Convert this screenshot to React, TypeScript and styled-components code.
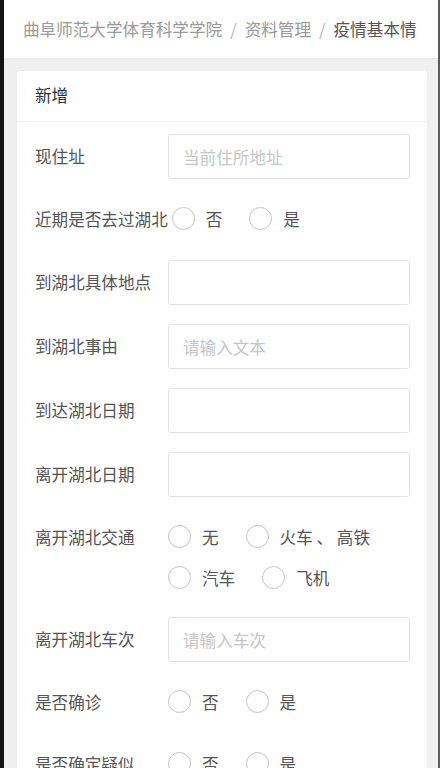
import React, { FC } from "react";
import styled, { createGlobalStyle } from "styled-components";

const GlobalStyle = createGlobalStyle`
  html, body {
    margin: 0;
    padding: 0;
    background: #f0f0f0;
  }
  body {
    font-family: "Noto Sans CJK SC", "Noto Sans", sans-serif;
    -webkit-font-smoothing: antialiased;
  }
`;

type Field =
  | { kind: "input"; label: string; placeholder?: string }
  | { kind: "radio"; label: string; options: string[] };

const fields: Field[] = [
  { kind: "input", label: "现住址", placeholder: "当前住所地址" },
  { kind: "radio", label: "近期是否去过湖北", options: ["否", "是"] },
  { kind: "input", label: "到湖北具体地点" },
  { kind: "input", label: "到湖北事由", placeholder: "请输入文本" },
  { kind: "input", label: "到达湖北日期" },
  { kind: "input", label: "离开湖北日期" },
  { kind: "radio", label: "离开湖北交通", options: ["无", "火车 、 高铁", "汽车", "飞机"] },
  { kind: "input", label: "离开湖北车次", placeholder: "请输入车次" },
  { kind: "radio", label: "是否确诊", options: ["否", "是"] },
  { kind: "radio", label: "是否确定疑似", options: ["否", "是"] },
];

const crumbs = ["曲阜师范大学体育科学学院", "资料管理", "疫情基本情"];

const App: FC = () => {
  return (
    <Frame>
      <GlobalStyle />
      <Breadcrumb>
        {crumbs.map((c, i) => (
          <React.Fragment key={c}>
            {i > 0 && <Separator>/</Separator>}
            <Crumb $current={i === crumbs.length - 1}>{c}</Crumb>
          </React.Fragment>
        ))}
      </Breadcrumb>
      <Main>
        <Card>
          <CardHeader>新增</CardHeader>
          <Form>
            {fields.map((f) => (
              <Row key={f.label}>
                <Label $radio={f.kind === "radio"}>{f.label}</Label>
                {f.kind === "input" ? (
                  <Input placeholder={f.placeholder} />
                ) : (
                  <Options>
                    {f.options.map((o) => (
                      <Radio key={o}>
                        <Circle />
                        <RadioText>{o}</RadioText>
                      </Radio>
                    ))}
                  </Options>
                )}
              </Row>
            ))}
          </Form>
        </Card>
      </Main>
    </Frame>
  );
};

export default App;

const Frame = styled.div`
  height: 100vh;
  box-sizing: border-box;
  border-left: 4px solid #141414;
  border-right: 2px solid #5c5c5c;
  background: #f0f0f0;
  overflow: hidden;
`;

const Breadcrumb = styled.div`
  height: 58px;
  box-sizing: border-box;
  padding-left: 19px;
  display: flex;
  align-items: center;
  white-space: nowrap;
  background: #fff;
  font-size: 16.6px;
  box-shadow: 0 1px 2px rgba(0, 0, 0, 0.04);
`;

const Crumb = styled.span<{ $current: boolean }>`
  color: ${(p) => (p.$current ? "#555" : "#9a9a9a")};
`;

const Separator = styled.span`
  margin: 0 8px;
  color: #b4b4b4;
`;

const Main = styled.div`
  padding: 12px 10px 0 12px;
`;

const Card = styled.div`
  background: #fff;
  border: 1px solid #ebeef5;
  border-radius: 4px;
`;

const CardHeader = styled.div`
  height: 51px;
  box-sizing: border-box;
  padding: 0 18px 3px;
  display: flex;
  align-items: center;
  border-bottom: 1px solid #efefef;
  color: #303133;
  font-size: 16.6px;
`;

const Form = styled.div`
  padding: 12px 17px 0 18px;
`;

const Row = styled.div`
  display: flex;
  align-items: flex-start;
  gap: 4px;
  margin-bottom: 19px;
`;

const Label = styled.div<{ $radio: boolean }>`
  flex: 0 0 auto;
  min-width: 129px;
  white-space: nowrap;
  font-size: 16.6px;
  line-height: ${(p) => (p.$radio ? "43px" : "45px")};
  color: #555;
`;

const Input = styled.input`
  flex: 1;
  min-width: 0;
  height: 45px;
  box-sizing: border-box;
  border: 1px solid #e2e2e2;
  border-radius: 3px;
  padding: 0 14px;
  font-family: inherit;
  font-size: 16.6px;
  color: #555;
  outline: none;
  &::placeholder {
    color: #c6c6c6;
  }
`;

const Options = styled.div`
  flex: 1;
  display: flex;
  flex-wrap: wrap;
`;

const Radio = styled.label`
  display: inline-flex;
  align-items: center;
  height: 41px;
  margin-right: 27px;
  cursor: pointer;
`;

const Circle = styled.span`
  width: 23px;
  height: 23px;
  box-sizing: border-box;
  border: 1.5px solid #c4c4c4;
  border-radius: 50%;
  background: #fff;
`;

const RadioText = styled.span`
  margin-left: 11px;
  font-size: 16.6px;
  color: #555;
`;
